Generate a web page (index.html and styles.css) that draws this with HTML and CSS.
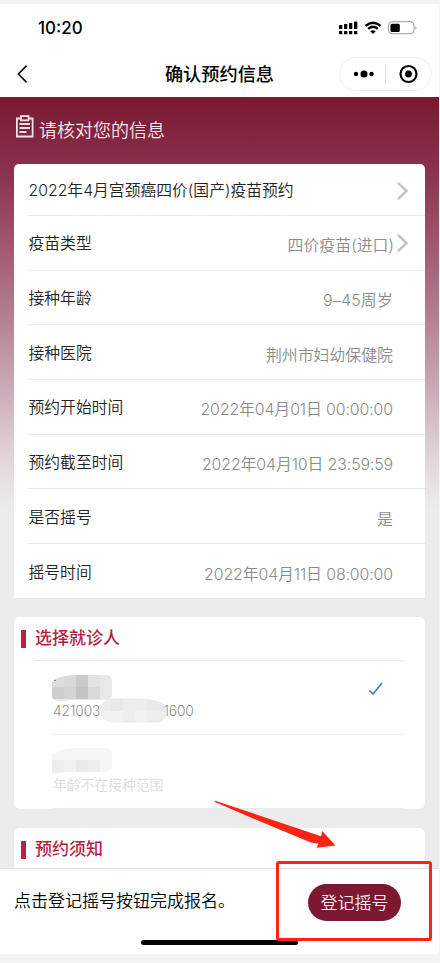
FILE: index.html
```html
<!DOCTYPE html>
<html lang="zh-CN">
<head>
<meta charset="utf-8">
<title>确认预约信息</title>
<link rel="stylesheet" href="styles.css">
</head>
<body>
<div class="phone">
  <header class="status">
    <span class="clock">10:20</span>
    <svg class="indicators" width="80" height="16" viewBox="0 0 80 16">
      <g fill="#000">
        <rect x="1" y="5" width="3.300" height="4" rx=".6"/><rect x="6" y="4" width="3.300" height="5" rx=".6"/><rect x="11" y="3" width="3.300" height="6" rx=".6"/><rect x="16" y="1.500" width="3.300" height="7.500" rx=".6"/>
        <rect x="1" y="11" width="3.300" height="3.300" rx=".6"/><rect x="6" y="11" width="3.300" height="3.300" rx=".6"/><rect x="11" y="11" width="3.300" height="3.300" rx=".6"/><rect x="16" y="11" width="3.300" height="3.300" rx=".6"/>
        <path d="M32.200 11.300Q35 9.200 37.800 11.300L35 14.100Z"/>
      </g>
      <path d="M27.500 5.900Q35-.6 42.500 5.900M30.200 8.900Q35 4.700 39.800 8.900" fill="none" stroke="#000" stroke-width="2.400"/>
      <rect x="50.500" y="1.700" width="25.500" height="12" rx="3.500" fill="none" stroke="#999"/>
      <rect x="52.500" y="3.700" width="9.300" height="8.200" rx="1.500" fill="#000"/>
      <path d="M77.500 5.500q1.800 2.200 0 4.400z" fill="#888"/>
    </svg>
  </header>
  <nav class="nav">
    <svg class="back" width="14" height="20" viewBox="0 0 14 20"><path d="M10.600 1.600 2.400 10l8.200 8.400" fill="none" stroke="#111" stroke-width="1.700"/></svg>
    <h1>确认预约信息</h1>
    <div class="capsule">
      <svg width="92" height="34" viewBox="0 0 92 34"><circle cx="17" cy="17" r="2.200"/><circle cx="25" cy="17" r="3.500"/><circle cx="32.500" cy="17" r="2.200"/><path d="M46.500 7v20" stroke="#ddd"/><circle cx="69.500" cy="17" r="8" fill="none" stroke="#000" stroke-width="2.200"/><circle cx="69.500" cy="17" r="3.400"/></svg>
    </div>
  </nav>
  <main class="content">
    <div class="hero">
      <svg width="20" height="24" viewBox="0 0 20 24" fill="none" stroke="#f1e2e7" stroke-width="1.800"><path d="M6 3.500H1.900V21.500h15.700V3.500H13.500"/><rect x="6" y="1.100" width="7.500" height="4.200"/><path d="M4.500 9h10.500M4.500 13h10.500M4.500 17h7"/></svg>
      <span>请核对您的信息</span>
    </div>
    <section class="card info">
      <div class="row first"><span class="label">2022年4月宫颈癌四价(国产)疫苗预约</span><svg class="arrow" width="14" height="20" viewBox="0 0 14 20"><path d="M2 1.800 10.500 10 2 18.200"/></svg></div>
      <div class="row linked"><span class="label">疫苗类型</span><span class="value">四价疫苗(进口)</span><svg class="arrow" width="14" height="20" viewBox="0 0 14 20"><path d="M2 1.800 10.500 10 2 18.200"/></svg></div>
      <div class="row"><span class="label">接种年龄</span><span class="value age">9–45周岁</span></div>
      <div class="row"><span class="label">接种医院</span><span class="value">荆州市妇幼保健院</span></div>
      <div class="row"><span class="label">预约开始时间</span><span class="value time">2022年04月01日 00:00:00</span></div>
      <div class="row"><span class="label">预约截至时间</span><span class="value time">2022年04月10日 23:59:59</span></div>
      <div class="row"><span class="label">是否摇号</span><span class="value">是</span></div>
      <div class="row"><span class="label">摇号时间</span><span class="value time">2022年04月11日 08:00:00</span></div>
    </section>
    <section class="card people">
      <h2>选择就诊人</h2>
      <div class="person">
        <svg class="mask" width="62" height="28" viewBox="0 0 62 28">
          <clipPath id="m1"><path d="M0 8Q5 2 24 1H52Q60 1 60 6V20Q60 26 52 26H18Q4 30 0 23Z"/></clipPath>
          <g clip-path="url(#m1)"><path fill="#e8e8e8" d="M0 0h62v28H0z"/><path fill="#dedede" d="M0 0h12v13H0z"/><path fill="#d8d8d8" d="M12 0h12v13H12z"/><path fill="#c9c9c9" d="M24 0h12v13H24z"/><path fill="#e2e2e2" d="M36 0h12v13H36z"/><path fill="#cecece" d="M0 13h12v12H0z"/><path fill="#d4d4d4" d="M12 13h12v12H12z"/><path fill="#c3c3c3" d="M24 13h12v12H24z"/><path fill="#dadada" d="M36 13h12v12H36z"/></g>
          <path d="M2 6.500h2" stroke="#777"/>
        </svg>
        <div class="idline"><span>421003</span><svg width="68" height="25" viewBox="0 0 68 25"><clipPath id="m2"><path d="M0 13Q3 1 15 .5H42Q66 2 67.500 13Q68 21 60 24.500H12Q2 22 0 13Z"/></clipPath><g clip-path="url(#m2)"><path fill="#ededed" d="M0 0h68v25H0z"/><path fill="#e9e9e9" d="M12 0h12v13H12zM48 0h20v13H48z"/><path fill="#f1f1f1" d="M0 13h24v12H0zM36 13h12v12H36z"/></g></svg><span>1600</span></div>
        <svg class="check" width="16" height="16" viewBox="0 0 16 16"><path d="M1.500 9.500 5 13 14 2" fill="none" stroke="#5079d3" stroke-width="1.700"/></svg>
      </div>
      <div class="person disabled">
        <svg class="mask" width="62" height="28" viewBox="0 0 62 28">
          <clipPath id="m3"><path d="M0 7Q10 1 24 1H52Q60 1 60 8V19Q60 25 52 25H18Q5 26 0 29Z"/></clipPath>
          <g clip-path="url(#m3)"><path fill="#f6f6f6" d="M0 0h62v28H0z"/><path fill="#ededed" d="M0 13h12v12H0zM36 13h12v12H36z"/><path fill="#f1f1f1" d="M12 13h12v12H12z"/><path fill="#e9e9e9" d="M24 13h12v12H24z"/></g>
        </svg>
        <div class="note">年龄不在接种范围</div>
      </div>
    </section>
    <section class="card notice"><h2>预约须知</h2></section>
  </main>
  <footer class="bar">
    <span class="tip">点击登记摇号按钮完成报名。</span>
    <button class="submit">登记摇号</button>
    <i class="home"></i>
    <i class="highlight"></i>
    <svg class="pointer" width="125" height="54" viewBox="0 0 125 54"><path d="M1 2Q.2.6 2 .9L84 28.500 107 36.200 108.300 31 121.500 45.500 102.500 47.700 104.500 43.800 97 42.500Q50 23.500 1 2Z" fill="#ff2412"/></svg>
  </footer>
</div>
</body>
</html>
```
FILE: styles.css
```css
* { box-sizing: border-box; }
body {
  margin: 0;
  height: 963px;
  padding: 4px 1px 9px 0;
  background: #f4f4f4;
  color: #222;
  font-family: Inter, "Noto Sans CJK SC", sans-serif;
  overflow: hidden;
}
.phone { height: 950px; display: flex; flex-direction: column; background: #fff; }
.status { height: 46px; display: flex; justify-content: space-between; align-items: flex-start; padding: 16px 21px 0 38px; }
.clock { font-size: 17px; line-height: 17px; font-weight: 550; color: #000; }
.nav { height: 47px; display: grid; grid-template-columns: 100px 1fr 100px; align-items: start; }
.back { margin: 14px 0 0 16px; }
h1 { margin: 0; padding-top: 12px; font-size: 18.200px; line-height: 24px; font-weight: 500; text-align: center; color: #000; white-space: nowrap; }
.capsule { width: 93px; height: 34px; margin-top: 7px; border: 1px solid #f0f0f0; border-radius: 17px; overflow: hidden; }
.capsule svg { display: block; margin: -1px 0 0 -1px; }
.content {
  height: 771px;
  padding: 0 14px;
  overflow: hidden;
  background: linear-gradient(#7b1830 0, #872f4b 66px, #9c5169 135px, #b37d8e 215px, #cbabb7 293px, #dfcfd5 350px, #ececec 410px);
}
.hero { height: 67px; display: flex; align-items: flex-start; padding: 18px 0 0 1px; gap: 4px; color: #f4e9ed; font-size: 18px; line-height: 31px; font-weight: 350; }
.card { background: #fff; border-radius: 6px; }
.info { height: 435px; border-radius: 5px 5px 1px 1px; border-bottom: 1px solid #e3e7ed; padding-left: 14px; }
.row { height: 54.700px; display: flex; justify-content: space-between; padding-right: 32px; border-bottom: 1px solid #e4edf3; }
.row:last-child { border: 0; }
.row.first { height: 52px; padding-right: 15px; }
.row.linked { padding-right: 15px; }
.label { font-size: 15.800px; line-height: 24px; padding: 16.400px 0 0 .5px; font-weight: 350; color: #222; white-space: nowrap; }
.first .label { padding-top: 15px; }
.linked .label { margin-right: auto; }
.value { font-size: 15.900px; line-height: 24px; padding-top: 18.400px; font-weight: 350; color: #8c8c8c; white-space: nowrap; }
.time { letter-spacing: -.12px; }
.age { letter-spacing: .2px; }
.arrow { margin: 17px 0 0 2px; fill: none; stroke: #c4c4c4; stroke-width: 2.500; }
.people { height: 192px; margin-top: 18px; padding: 0 21px; }
h2 { margin: 0 0 0 -14px; height: 43px; padding: 10px 0 0; display: flex; gap: 9px; color: #b51f46; font-size: 17px; line-height: 22px; font-weight: 500; }
h2::before { content: ""; width: 5px; height: 18px; margin-top: 3px; background: #ba2148; }
.person { position: relative; height: 75px; margin-left: 17px; border-bottom: 1px solid #e8ebf2; }
.people h2 + .person::before { content: ""; position: absolute; left: -17px; right: 0; top: 0; border-top: 1px solid #e6e9ef; }
.mask { display: block; position: absolute; left: 0; top: 14px; }
.idline { display: flex; align-items: center; padding: 38px 0 0 1px; height: 63px; color: #8c8c8c; font-size: 13.800px; line-height: 20px; font-weight: 350; letter-spacing: -.1px; }
.idline svg { margin: 0 -4px 0 -1px; position: relative; }
.check { position: absolute; right: 20px; top: 21px; }
.disabled { height: 74px; }
.disabled .mask { top: 12px; }
.note { padding: 39px 0 0 1px; font-size: 13.800px; line-height: 22px; font-weight: 350; color: #dcdcdc; }
.notice { height: 60px; margin-top: 19px; padding-left: 21px; }
.bar { position: relative; height: 86px; border-top: 1px solid #e2e2e2; background: #fff; display: flex; justify-content: space-between; align-items: flex-start; padding: 15px 38px 0 14px; }
.tip { font-size: 17px; line-height: 34px; font-weight: 350; color: #000; white-space: nowrap; }
.submit { width: 93px; height: 37px; border: 0; padding: 0; border-radius: 19px; background: #7c1831; color: #f8edf0; font: 350 17px/36px Inter, "Noto Sans CJK SC", sans-serif; }
.home { position: absolute; left: 141px; top: 71px; width: 157px; height: 5px; border-radius: 3px; background: #000; }
.highlight { position: absolute; left: 276px; top: -8px; width: 156px; height: 80px; border: 3px solid #ff2412; border-radius: 3px; }
.pointer { position: absolute; left: 214px; top: -69px; }
```
